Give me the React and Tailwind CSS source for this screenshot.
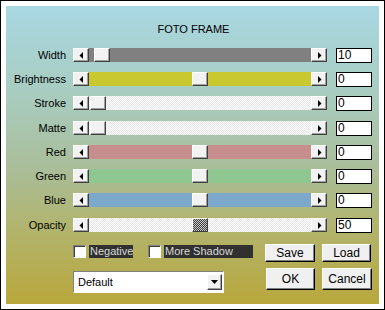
import React from "react";

const font = { fontFamily: '"Liberation Sans", Arial, sans-serif' };

function Btn3D({ className = "", children }) {
  return (
    <div
      className={
        "flex items-center justify-center bg-[#f2f2f2] border-t border-l border-t-white border-l-white border-r border-b border-r-[#404040] border-b-[#404040] shadow-[inset_-1px_-1px_0_#a0a0a0] " +
        className
      }
    >
      {children}
    </div>
  );
}

function LeftArrow() {
  return (
    <svg width="4" height="7" viewBox="0 0 4 7">
      <path d="M4 0 L4 7 L0.5 3.5 Z" fill="#000" />
    </svg>
  );
}
function RightArrow() {
  return (
    <svg width="4" height="7" viewBox="0 0 4 7">
      <path d="M0 0 L0 7 L3.5 3.5 Z" fill="#000" />
    </svg>
  );
}

const tracks = {
  gray: "bg-[#808080]",
  yellow: "bg-[#c9c82e]",
  dither:
    "bg-[repeating-conic-gradient(#ffffff_0%_25%,#e6e6e6_0%_50%)] bg-[length:2px_2px]",
  red: "bg-[#c88e8e]",
  green: "bg-[#90c690]",
  blue: "bg-[#7ca8cc]",
};

function Row({ label, track, thumb, value, h, dark }) {
  return (
    <div className={"flex items-start " + h}>
      <div className="w-[60px] text-right text-[11px] leading-[14px] text-black">
        {label}
      </div>
      <div className="ml-[7px] flex h-[14px] w-[254px]">
        <Btn3D className="w-[16px] h-[14px] pr-[1px]">
          <LeftArrow />
        </Btn3D>
        <div className={"h-[14px] w-[222px] " + tracks[track]}>
          <div className="flex h-full" style={{ paddingLeft: thumb }}>
            {dark ? (
              <div className="w-[16px] h-[14px] border-t border-l border-t-white border-l-white border-r border-b border-r-[#404040] border-b-[#404040] bg-[repeating-conic-gradient(#404040_0%_25%,#c8c8c8_0%_50%)] bg-[length:2px_2px]" />
            ) : (
              <Btn3D className="w-[16px] h-[14px]" />
            )}
          </div>
        </div>
        <Btn3D className="w-[16px] h-[14px] pl-[1px]">
          <RightArrow />
        </Btn3D>
      </div>
      <div className="ml-[9px] flex h-[15px] w-[36px] items-center border border-black bg-white pl-[1px] text-[12px] leading-[13px] text-black">
        {value}
      </div>
    </div>
  );
}

function Button({ children, className = "" }) {
  return (
    <div
      className={
        "flex items-center justify-center bg-[#f0f0f0] border-t border-l border-t-white border-l-white border-r border-b border-r-black border-b-black shadow-[inset_-1px_-1px_0_#808080] text-[12px] text-black " +
        className
      }
    >
      {children}
    </div>
  );
}

function Check({ label, w }) {
  return (
    <div className="flex items-center">
      <div className="h-[13px] w-[13px] bg-white border-t border-l border-t-[#808080] border-l-[#808080] border-r border-b border-r-white border-b-white shadow-[inset_1px_1px_0_#404040]" />
      <div
        className={
          "ml-[3px] h-[13px] bg-[#303030] text-[#d8d8d8] text-[11px] leading-[13px] pl-[1px] " +
          w
        }
      >
        {label}
      </div>
    </div>
  );
}

export default function App() {
  return (
    <div
      style={font}
      className="h-[310px] w-[385px] border border-black bg-white p-[5px]"
    >
      <div className="flex h-full w-full flex-col bg-[linear-gradient(to_bottom,#a9d8e3_0%,#a8cbbc_32%,#aabd98_55%,#b1b46c_75%,#b9a73c_100%)]">
        <div className="pt-[17px] text-center text-[11px] leading-[13px] text-black pl-[2px]">
          FOTO FRAME
        </div>
        <div className="mt-[12px] flex flex-col">
          <Row label="Width" track="gray" thumb={5} value="10" h="h-[24px]" />
          <Row label="Brightness" track="yellow" thumb={103} value="0" h="h-[24px]" />
          <Row label="Stroke" track="dither" thumb={1} value="0" h="h-[25px]" />
          <Row label="Matte" track="dither" thumb={1} value="0" h="h-[24px]" />
          <Row label="Red" track="red" thumb={103} value="0" h="h-[24px]" />
          <Row label="Green" track="green" thumb={103} value="0" h="h-[24px]" />
          <Row label="Blue" track="blue" thumb={103} value="0" h="h-[25px]" />
          <Row label="Opacity" track="dither" thumb={103} value="50" h="h-[24px]" dark />
        </div>
        <div className="mt-[1px] flex">
          <div className="ml-[67px] flex w-[150px] flex-col">
            <div className="mt-[2px] flex items-center gap-[15px]">
              <Check label="Negative" w="w-[44px]" />
              <Check label="More Shadow" w="w-[89px]" />
            </div>
            <div className="mt-[13px] flex h-[22px] w-[151px] items-center justify-between border-t border-l border-t-[#808080] border-l-[#808080] border-r border-b border-r-white border-b-white bg-white pl-[4px] pr-[1px] text-[11px] text-black">
              <span>Default</span>
              <Btn3D className="h-[16px] w-[15px]">
                <svg width="7" height="4" viewBox="0 0 7 4">
                  <path d="M0 0 L7 0 L3.5 4 Z" fill="#000" />
                </svg>
              </Btn3D>
            </div>
          </div>
          <div className="ml-[42px] flex flex-col">
            <div className="mt-[1px] flex gap-[7px]">
              <Button className="h-[18px] w-[50px]">Save</Button>
              <Button className="h-[18px] w-[49px]">Load</Button>
            </div>
            <div className="mt-[6px] flex gap-[7px] pl-[1px]">
              <Button className="h-[22px] w-[49px]">OK</Button>
              <Button className="h-[22px] w-[50px]">Cancel</Button>
            </div>
          </div>
        </div>
      </div>
    </div>
  );
}
